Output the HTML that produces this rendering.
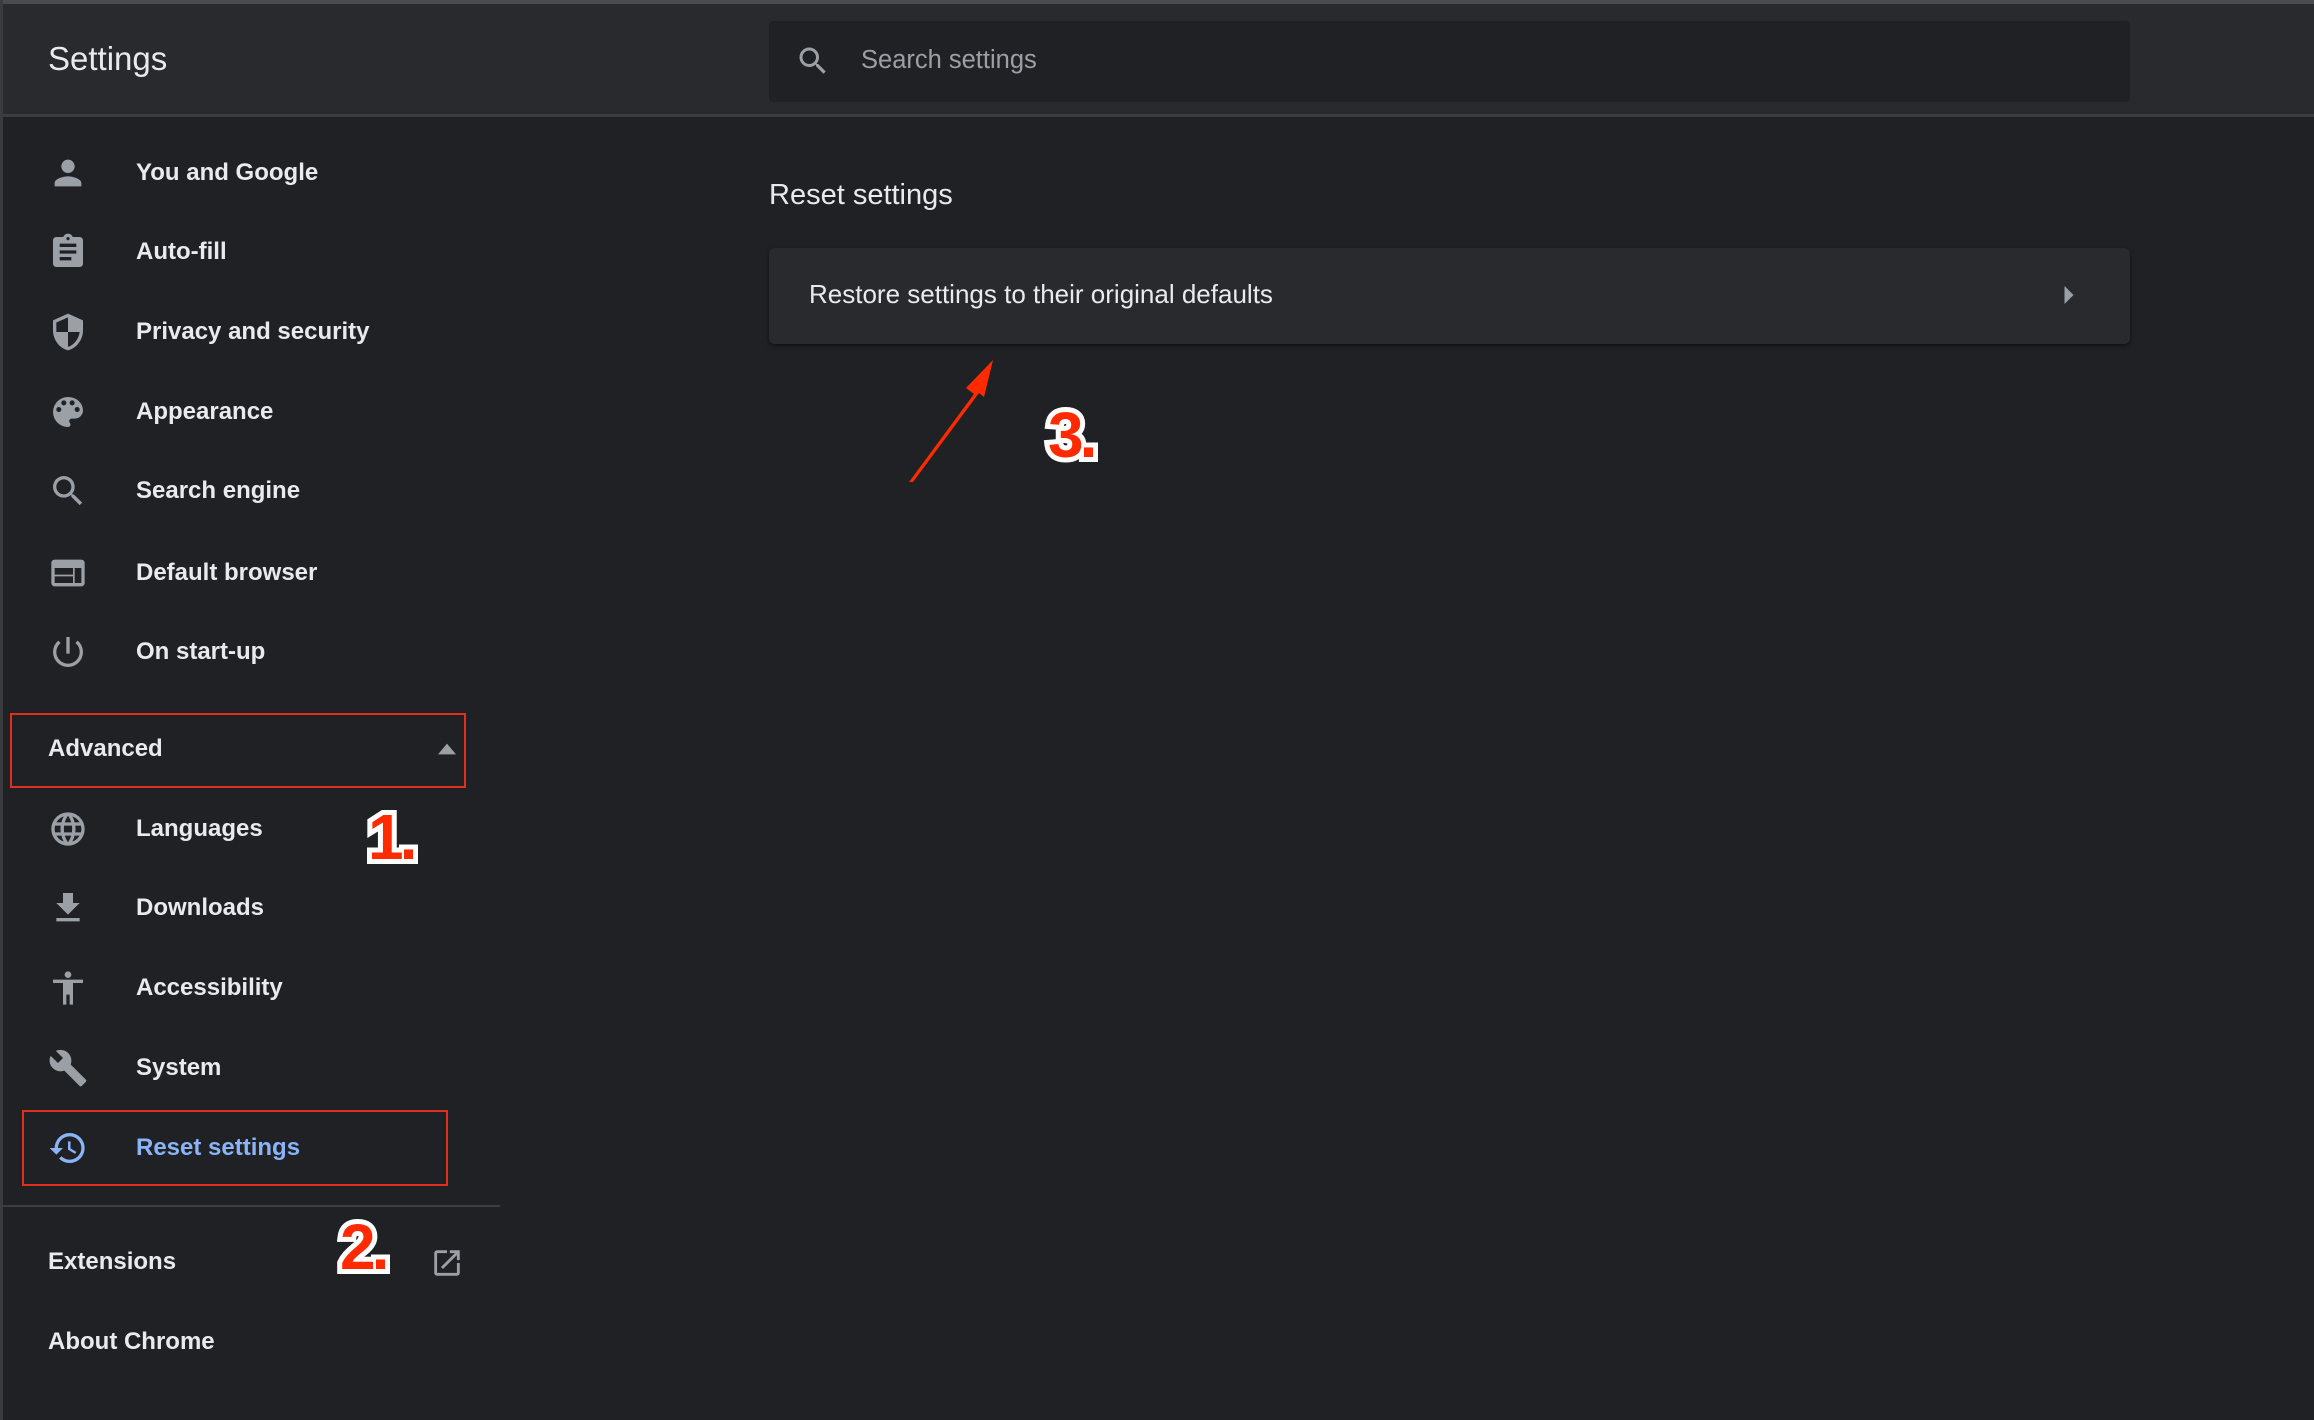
<!DOCTYPE html>
<html><head><meta charset="utf-8"><style>
*{margin:0;padding:0;box-sizing:border-box}
body{width:2314px;height:1420px;background:#202124;font-family:"Liberation Sans",sans-serif;position:relative;overflow:hidden;color:#e8eaed}
.hdr{position:absolute;left:0;top:4px;width:2314px;height:113px;background:#292a2d;border-bottom:3px solid #3c3d40}
.topline{position:absolute;left:0;top:0;width:2314px;height:5px;background:#4a4b4e}
.leftline{position:absolute;left:0;top:0;width:3px;height:1420px;background:#3a3b3e}
.t{position:absolute;white-space:nowrap}
.title{left:48px;top:40px;font-size:33px;color:#e8eaed}
.search{position:absolute;left:769px;top:21px;width:1361px;height:81px;background:#202124;border-radius:4px}
.nav{position:absolute;left:136px;font-size:24px;font-weight:bold;color:#e8eaed;transform:translateY(-50%)}
.ic{position:absolute;left:48px;width:40px;height:40px;transform:translateY(-50%)}
.box{position:absolute;border:2px solid #e0301e}
.num{position:absolute;font-family:"Liberation Sans",sans-serif;font-weight:900;font-size:64px;color:#ff2a00;-webkit-text-stroke:10px #fff;paint-order:stroke fill;letter-spacing:-4px}
</style></head><body>
<div class="topline"></div>
<div class="hdr"></div>
<div class="leftline"></div>
<div class="t title">Settings</div>
<div class="search">
<svg style="position:absolute;left:26px;top:22px" width="36" height="36" viewBox="0 0 24 24"><path fill="#9aa0a6" d="M15.5 14h-.79l-.28-.27A6.47 6.47 0 0016 9.5 6.5 6.5 0 109.5 16c1.61 0 3.09-.59 4.23-1.57l.27.28v.79l5 4.99L20.49 19l-4.99-5zm-6 0C7.01 14 5 11.99 5 9.5S7.01 5 9.5 5 14 7.01 14 9.5 11.99 14 9.5 14z"/></svg>
<div class="t" style="left:92px;top:25px;font-size:25.5px;color:#9aa0a6">Search settings</div>
</div>

<svg class="ic" style="top:173px" viewBox="0 0 24 24"><path fill="#9aa0a6" d="M12 12c2.21 0 4-1.790 4-4s-1.79-4-4-4-4 1.79-4 4 1.79 4 4 4zm0 2c-2.67 0-8 1.34-8 4v2h16v-2c0-2.66-5.33-4-8-4z"/></svg>
<div class="nav" style="top:173px">You and Google</div>
<svg class="ic" style="top:252px" viewBox="0 0 24 24"><path fill="#9aa0a6" d="M19 3h-4.18C14.4 1.84 13.3 1 12 1s-2.4.84-2.82 2H5c-1.1 0-2 .9-2 2v14c0 1.1.9 2 2 2h14c1.1 0 2-.9 2-2V5c0-1.1-.9-2-2-2zm-7 0c.55 0 1 .45 1 1s-.45 1-1 1-1-.45-1-1 .45-1 1-1zm2 14H7v-2h7v2zm3-4H7v-2h10v2zm0-4H7V7h10v2z"/></svg>
<div class="nav" style="top:252px">Auto-fill</div>
<svg class="ic" style="top:332px" viewBox="0 0 24 24"><path fill="#9aa0a6" d="M12 1L3 5v6c0 5.550 3.84 10.74 9 12 5.16-1.26 9-6.45 9-12V5l-9-4zm0 10.99h7c-.53 4.12-3.28 7.790-7 8.94V12H5V6.3l7-3.11v8.8z"/></svg>
<div class="nav" style="top:332px">Privacy and security</div>
<svg class="ic" style="top:412px" viewBox="0 0 24 24"><path fill="#9aa0a6" d="M12 3a9 9 0 000 18c.83 0 1.5-.67 1.5-1.5 0-.39-.15-.74-.39-1.01-.23-.26-.38-.61-.38-.99 0-.83.67-1.5 1.5-1.5H16c2.76 0 5-2.24 5-5 0-4.42-4.03-8-9-8zm-5.5 9c-.83 0-1.5-.67-1.5-1.5S5.67 9 6.5 9 8 9.67 8 10.5 7.33 12 6.5 12zm3-4C8.670 8 8 7.33 8 6.5S8.67 5 9.5 5s1.5.67 1.5 1.5S10.33 8 9.5 8zm5 0c-.83 0-1.5-.67-1.5-1.5S13.67 5 14.5 5s1.5.67 1.5 1.5S15.33 8 14.5 8zm3 4c-.83 0-1.5-.67-1.5-1.5S16.67 9 17.5 9s1.5.67 1.5 1.5-.67 1.5-1.5 1.5z"/></svg>
<div class="nav" style="top:412px">Appearance</div>
<svg class="ic" style="top:491px" viewBox="0 0 24 24"><path fill="#9aa0a6" d="M15.5 14h-.79l-.28-.27A6.47 6.47 0 0016 9.5 6.5 6.5 0 109.5 16c1.61 0 3.09-.59 4.23-1.57l.27.28v.79l5 4.99L20.49 19l-4.99-5zm-6 0C7.01 14 5 11.99 5 9.5S7.01 5 9.5 5 14 7.01 14 9.5 11.99 14 9.5 14z"/></svg>
<div class="nav" style="top:491px">Search engine</div>
<svg class="ic" style="top:573px" viewBox="0 0 24 24"><path fill="#9aa0a6" d="M20 4H4c-1.1 0-2 .9-2 2v12c0 1.1.9 2 2 2h16c1.1 0 2-.9 2-2V6c0-1.1-.9-2-2-2zm-5 14H4v-4h11v4zm0-5H4V9h11v4zm5 5h-4V9h4v9z"/></svg>
<div class="nav" style="top:573px">Default browser</div>
<svg class="ic" style="top:652px" viewBox="0 0 24 24"><path fill="#9aa0a6" d="M13 3h-2v10h2V3zm4.83 2.17l-1.42 1.42A6.92 6.92 0 0119 12c0 3.87-3.13 7-7 7A6.995 6.995 0 017.58 6.58L6.17 5.17A8.932 8.932 0 003 12a9 9 0 0018 0c0-2.74-1.23-5.18-3.17-6.83z"/></svg>
<div class="nav" style="top:652px">On start-up</div>

<div class="box" style="left:10px;top:713px;width:456px;height:75px"></div>
<div class="nav" style="left:48px;top:749px">Advanced</div>
<svg style="position:absolute;left:438px;top:743px" width="18" height="12" viewBox="0 0 10 6"><path fill="#9aa0a6" d="M0 6L5 0 10 6z"/></svg>

<svg class="ic" style="top:829px" viewBox="0 0 24 24"><path fill="#9aa0a6" d="M11.99 2C6.47 2 2 6.48 2 12s4.47 10 9.99 10C17.52 22 22 17.52 22 12S17.52 2 11.99 2zm6.93 6h-2.95a15.65 15.65 0 00-1.38-3.56A8.03 8.03 0 0118.920 8zM12 4.04c.83 1.2 1.48 2.53 1.91 3.96h-3.82c.43-1.43 1.08-2.76 1.91-3.96zM4.26 14C4.1 13.36 4 12.69 4 12s.1-1.36.26-2h3.38c-.08.66-.14 1.32-.14 2s.06 1.34.14 2H4.26zm.82 2h2.95c.32 1.25.78 2.45 1.38 3.56A7.987 7.987 0 015.08 16zm2.95-8H5.08a7.987 7.987 0 014.33-3.56A15.65 15.65 0 008.03 8zM12 19.96c-.83-1.2-1.48-2.53-1.91-3.96h3.82c-.43 1.43-1.08 2.76-1.91 3.96zM14.34 14H9.66c-.09-.66-.16-1.32-.16-2s.07-1.35.16-2h4.68c.09.65.16 1.32.16 2s-.07 1.34-.16 2zm.25 5.56c.6-1.11 1.06-2.31 1.38-3.56h2.95a8.03 8.03 0 01-4.33 3.56zM16.36 14c.08-.66.14-1.32.14-2s-.06-1.34-.14-2h3.38c.16.64.26 1.31.26 2s-.1 1.36-.26 2h-3.38z"/></svg>
<div class="nav" style="top:829px">Languages</div>
<svg class="ic" style="top:908px" viewBox="0 0 24 24"><path fill="#9aa0a6" d="M19 9h-4V3H9v6H5l7 7 7-7zM5 18v2h14v-2H5z"/></svg>
<div class="nav" style="top:908px">Downloads</div>
<svg class="ic" style="top:988px" viewBox="0 0 24 24"><path fill="#9aa0a6" d="M12 2c1.1 0 2 .9 2 2s-.9 2-2 2-2-.9-2-2 .9-2 2-2zm9 7h-6v13h-2v-6h-2v6H9V9H3V7h18v2z"/></svg>
<div class="nav" style="top:988px">Accessibility</div>
<svg class="ic" style="top:1068px" viewBox="0 0 24 24"><path fill="#9aa0a6" d="M22.7 19l-9.1-9.1c.9-2.3.4-5-1.5-6.9-2-2-5-2.4-7.4-1.3L9 6 6 9 1.6 4.7C.4 7.1.9 10.1 2.9 12.1c1.9 1.9 4.6 2.4 6.9 1.5l9.1 9.1c.4.4 1 .4 1.4 0l2.3-2.3c.5-.4.5-1.1.1-1.4z"/></svg>
<div class="nav" style="top:1068px">System</div>

<div class="box" style="left:22px;top:1110px;width:426px;height:76px"></div>
<svg class="ic" style="top:1148px" viewBox="0 0 24 24"><path fill="#8ab4f8" d="M13 3a9 9 0 00-9 9H1l3.89 3.89.07.14L9 12H6c0-3.87 3.13-7 7-7s7 3.13 7 7-3.13 7-7 7c-1.93 0-3.68-.79-4.94-2.06l-1.42 1.42A8.954 8.954 0 0013 21a9 9 0 000-18zm-1 5v5l4.28 2.54.72-1.21-3.5-2.08V8H12z"/></svg>
<div class="nav" style="top:1148px;color:#8ab4f8">Reset settings</div>

<div style="position:absolute;left:0;top:1205px;width:500px;height:2px;background:#3c3d40"></div>
<div class="nav" style="left:48px;top:1262px">Extensions</div>
<svg style="position:absolute;left:430px;top:1246px" width="34" height="34" viewBox="0 0 24 24"><path fill="#9aa0a6" d="M19 19H5V5h7V3H5a2 2 0 00-2 2v14a2 2 0 002 2h14c1.1 0 2-.9 2-2v-7h-2v7zM14 3v2h3.59l-9.83 9.83 1.41 1.41L19 6.41V10h2V3h-7z"/></svg>
<div class="nav" style="left:48px;top:1342px">About Chrome</div>

<div class="t" style="left:769px;top:179px;font-size:29px;color:#e8eaed">Reset settings</div>
<div style="position:absolute;left:769px;top:248px;width:1361px;height:96px;background:#292a2d;border-radius:6px;box-shadow:0 2px 4px rgba(0,0,0,.5)"></div>
<div class="t" style="left:809px;top:279px;font-size:26px;color:#e8eaed">Restore settings to their original defaults</div>
<svg style="position:absolute;left:2064px;top:286px" width="10" height="18" viewBox="0 0 5 10"><path fill="#9aa0a6" d="M0 0L5 5 0 10z"/></svg>

<svg style="position:absolute;left:0;top:0" width="2314" height="1420"><path d="M909 482L974 394L966 388L993 360L984 397L979 393L913 482Z" fill="#ff2a00"/></svg>

<div class="num" style="left:368px;top:800px">1.</div>
<div class="num" style="left:340px;top:1210px">2.</div>
<div class="num" style="left:1048px;top:398px">3.</div>
</body></html>
